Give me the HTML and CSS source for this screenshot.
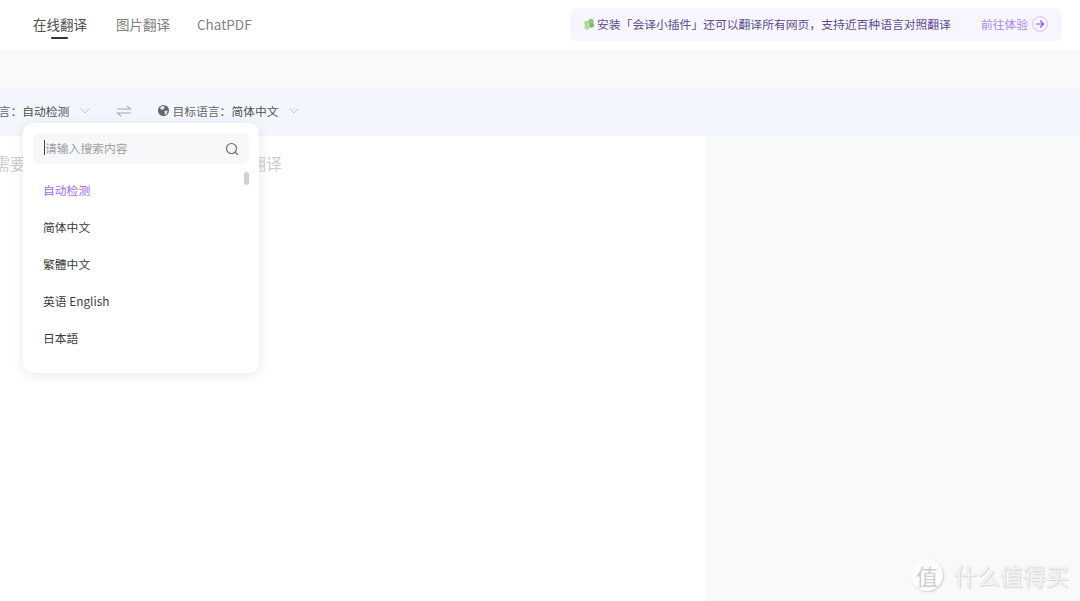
FILE: index.html

```html
<!DOCTYPE html>
<html lang="zh-CN">
<head>
  <meta charset="UTF-8">
  <meta name="viewport" content="width=device-width, initial-scale=1.0">
  <title>在线翻译</title>
  <link rel="stylesheet" href="styles.css">
</head>
<body>
  <header class="topbar">
    <nav class="tabs">
      <a class="tab active">在线翻译</a>
      <a class="tab">图片翻译</a>
      <a class="tab">ChatPDF</a>
    </nav>
    <div class="promo">
      <svg class="promo-icon" width="12" height="12" viewBox="0 0 12 12">
        <circle cx="8" cy="3.400" r="2.700" fill="#8acb78"/>
        <circle cx="3.400" cy="5" r="2.200" fill="#a3d98a"/>
        <circle cx="8.500" cy="7.200" r="2.500" fill="#78bf72"/>
        <circle cx="4" cy="9.100" r="2.600" fill="#acdc95"/>
      </svg>
      <span class="promo-text">安装「会译小插件」还可以翻译所有网页，支持近百种语言对照翻译</span>
      <a class="promo-link">前往体验</a>
      <svg class="promo-arrow" width="16" height="16" viewBox="0 0 16 16" fill="none">
        <circle cx="8" cy="8" r="7.400" stroke="#d3bffc" stroke-width="1"/>
        <path d="M4.500 8h7M8.600 5l3 3-3 3" stroke="#8d5cf0" stroke-width="1.200" stroke-linecap="round" stroke-linejoin="round"/>
      </svg>
    </div>
  </header>

  <div class="strip"></div>

  <div class="langbar">
    <span class="lang lang-source">
      <span class="lang-label">源语言：</span><span class="lang-value">自动检测</span>
      <svg class="chevron" width="10" height="6" viewBox="0 0 10 6" fill="none"><path d="M.5.5 5 5 9.500.5" stroke="#c3c6cf"/></svg>
    </span>
    <svg class="swap" width="16" height="12" viewBox="0 0 16 12" fill="none">
      <path d="M1 4h13.500L11 .8M15 8H1.500L5 11.200" stroke="#a3a8b6" stroke-width="1.100"/>
    </svg>
    <span class="lang">
      <svg class="globe" width="11" height="11" viewBox="0 0 11 11">
        <circle cx="5.500" cy="5.500" r="5.500" fill="#66676d"/>
        <path d="M3 1.500 6 1l.5 2L4.500 5 2 3.500zM6.500 6 9.500 5.500 9 8.500 7 10z" fill="#e9ebf3"/>
      </svg>
      <span class="lang-label">目标语言：</span><span class="lang-value">简体中文</span>
      <svg class="chevron" width="10" height="6" viewBox="0 0 10 6" fill="none"><path d="M.5.5 5 5 9.500.5" stroke="#c3c6cf"/></svg>
    </span>
  </div>

  <main class="workspace">
    <section class="source-pane">
      <p class="placeholder">需要翻译的文本粘贴在这里即可开始翻译</p>
    </section>
    <section class="target-pane"></section>
  </main>

  <div class="dropdown">
    <div class="search">
      <span class="search-text">请输入搜索内容</span>
      <svg width="14" height="14" viewBox="0 0 14 14" fill="none">
        <circle cx="6.500" cy="6.500" r="5" stroke="#666" stroke-width="1.100"/>
        <path d="m10.200 10.200 2.300 2.300" stroke="#666" stroke-width="1.100" stroke-linecap="round"/>
      </svg>
    </div>
    <ul class="options">
      <li class="option selected">自动检测</li>
      <li class="option">简体中文</li>
      <li class="option">繁體中文</li>
      <li class="option">英语 English</li>
      <li class="option">日本語</li>
    </ul>
    <div class="scroll-thumb"></div>
  </div>

  <div class="watermark">
    <span class="wm-badge">值</span>
    <span class="wm-text">什么值得买</span>
  </div>
</body>
</html>
```

FILE: styles.css

```css
* {
  box-sizing: border-box;
}
html, body {
  height: 100%;
}
body {
  margin: 0;
  display: flex;
  flex-direction: column;
  overflow: hidden;
  background-color: #fff;
  color: #333;
  font-family: "Noto Sans CJK SC", "Noto Sans", sans-serif;
  font-size: 11.8px;
}
.topbar {
  height: 51px;
  flex-shrink: 0;
  display: flex;
  align-items: center;
  justify-content: space-between;
  padding: 0 18px 3px 33px;
  background-color: #fff;
  box-shadow: 0 1px 2px rgba(30, 30, 60, 0.03);
  position: relative;
  z-index: 1;
}
.tabs {
  display: flex;
  gap: 27px;
  font-size: 13.500px;
  color: #808080;
}
.tab {
  position: relative;
  line-height: 20px;
}
.tab.active {
  color: #505050;
  margin-right: 2px;
}
.tab.active::after {
  content: "";
  position: absolute;
  left: 18px;
  bottom: -5px;
  width: 17px;
  height: 2px;
  border-radius: 1px;
  background-color: #333;
}
.promo {
  width: 492px;
  height: 33px;
  display: flex;
  align-items: center;
  padding: 0 13px;
  border-radius: 6px;
  background-color: #f7f5fe;
}
.promo-icon {
  margin-right: 2px;
}
.promo-text {
  color: #5a4c92;
  line-height: 16px;
  margin-top: -1px;
}
.promo-link {
  margin-top: -1px;
  margin-left: 30px;
  color: #a986f6;
}
.promo-arrow {
  margin-left: 4px;
}
.strip {
  height: 37px;
  flex-shrink: 0;
  background-color: #f9f9fc;
}
.langbar {
  height: 48px;
  flex-shrink: 0;
  display: flex;
  align-items: center;
  padding-bottom: 3px;
  background-color: #f4f6fe;
  color: #666;
}
.lang {
  display: flex;
  align-items: center;
}
.lang-source {
  margin-left: -25px;
}
.lang-value {
  color: #505050;
}
.chevron {
  margin-left: 10px;
}
.lang-source .chevron {
  margin-left: 11px;
}
.swap {
  margin: 0 26px 0 26px;
}
.globe {
  margin-right: 3px;
}
.workspace {
  flex: 1;
  display: grid;
  grid-template-columns: 706px 1fr;
}
.source-pane {
  background-color: #fff;
  overflow: hidden;
}
.target-pane {
  background-color: #f8f9fb;
}
.placeholder {
  margin: 15px 0 0 -6px;
  font-size: 16px;
  line-height: 24px;
  color: #cdcdcd;
  white-space: nowrap;
}
.dropdown {
  position: absolute;
  left: 23px;
  top: 123px;
  width: 236px;
  height: 250px;
  padding: 10px;
  border-radius: 10px;
  background-color: #fff;
  box-shadow: 0 2px 12px rgba(40, 40, 70, 0.1);
}
.search {
  height: 31px;
  display: flex;
  align-items: center;
  justify-content: space-between;
  padding: 0 10px 0 11px;
  border-radius: 6px;
  background-color: #f6f7f9;
}
.search-text {
  border-left: 1px solid #444;
  line-height: 15px;
  margin-top: -2px;
  color: #a0a0a0;
}
.options {
  margin: 7px 0 0;
  padding: 0 0 0 10px;
  list-style: none;
  color: #3c3c3c;
}
.option {
  height: 37.100px;
  display: flex;
  align-items: center;
}
.option.selected {
  color: #a06af6;
}
.scroll-thumb {
  position: absolute;
  right: 10px;
  top: 49px;
  width: 5px;
  height: 13px;
  border-radius: 3px;
  background-color: #cfcfcf;
}
.watermark {
  position: absolute;
  left: 911px;
  top: 559px;
  display: flex;
  align-items: center;
  gap: 11px;
  color: #f4f5f7;
  text-shadow: 0 0 1px #c8c8c8, 1px 1px 1px #d8d8d8;
}
.wm-badge {
  width: 32px;
  height: 32px;
  display: flex;
  align-items: center;
  justify-content: center;
  border-radius: 50%;
  background-color: #fdfdfd;
  color: #cfcfcf;
  font-size: 22px;
  line-height: 32px;
  text-shadow: none;
  box-shadow: 1px 1px 2px #cfcfcf;
}
.wm-text {
  font-size: 23px;
  line-height: 32px;
}
```
